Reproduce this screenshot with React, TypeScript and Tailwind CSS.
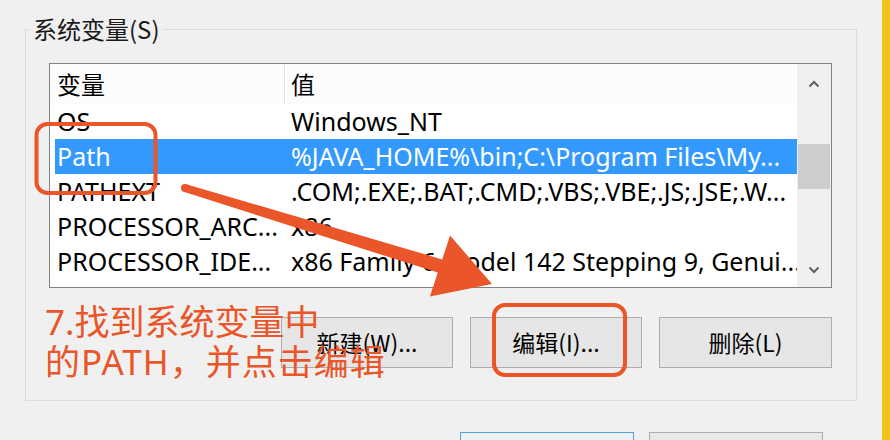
import React from "react";

const ORANGE = "#ea5529";

const rows = [
  { name: "OS", value: "Windows_NT", sel: false },
  { name: "Path", value: "%JAVA_HOME%\\bin;C:\\Program Files\\My...", sel: true },
  { name: "PATHEXT", value: ".COM;.EXE;.BAT;.CMD;.VBS;.VBE;.JS;.JSE;.W...", sel: false },
  { name: "PROCESSOR_ARC...", value: "x86", sel: false },
  { name: "PROCESSOR_IDE...", value: "x86 Family 6 Model 142 Stepping 9, Genui...", sel: false },
];

function Chevron({ up }: { up: boolean }) {
  return (
    <svg width="12" height="8" viewBox="0 0 12 8">
      <path
        d={up ? "M1.5 6.5 L6 2 L10.5 6.5" : "M1.5 1.5 L6 6 L10.5 1.5"}
        fill="none"
        stroke="#606060"
        strokeWidth="2"
      />
    </svg>
  );
}

export default function App() {
  return (
    <div className="relative flex h-[440px] w-[890px] overflow-hidden bg-[#f0f0f0] font-['Noto_Sans','Noto_Sans_CJK_SC',sans-serif] text-black">
      <div className="flex w-[882px] flex-col pl-[25px] pt-[29px]">
        <div className="relative w-[832px] border border-[#dcdcdc] pb-[32px] pl-[23px] pr-[24px] pt-[33px]">
          <div className="absolute left-[5px] top-[-16px] bg-[#f0f0f0] px-[2px] font-['Noto_Sans_CJK_SC','Noto_Sans',sans-serif] text-[24px] leading-[30px] text-[#1a1a1a]">
            系统变量(S)
          </div>
          <div className="flex h-[225px] border border-[#828282] bg-white">
            <div className="flex min-w-0 flex-1 flex-col">
              <div className="flex h-[40px] bg-[#fcfcfc]">
                <div className="flex w-[235px] items-center border-r border-[#e5e5e5] pl-[7px] font-['Noto_Sans_CJK_SC',sans-serif] text-[24px]">
                  变量
                </div>
                <div className="flex items-center pl-[6px] font-['Noto_Sans_CJK_SC',sans-serif] text-[24px]">
                  值
                </div>
              </div>
              {rows.map((r) => (
                <div
                  key={r.name}
                  className={
                    "ml-[5px] flex h-[35px] items-center whitespace-nowrap text-[25px] leading-[35px] " +
                    (r.sel ? "bg-[#3399ff] text-white" : "")
                  }
                >
                  <div className="w-[230px] overflow-hidden pl-[2px]">{r.name}</div>
                  <div className="min-w-0 flex-1 overflow-hidden pl-[6px]">{r.value}</div>
                </div>
              ))}
            </div>
            <div className="flex w-[34px] flex-col bg-[#f0f0f0]">
              <div className="flex h-[40px] items-center justify-center">
                <Chevron up />
              </div>
              <div className="flex-1 px-[1px] pt-[40px]">
                <div className="h-[45px] bg-[#cdcdcd]" />
              </div>
              <div className="flex h-[34px] items-center justify-center">
                <Chevron up={false} />
              </div>
            </div>
          </div>
          <div className="mt-[29px] flex justify-end gap-[17px] font-['Noto_Sans_CJK_SC',sans-serif] text-[23px]">
            <button className="flex h-[51px] w-[172px] items-center justify-center border border-[#adadad] bg-[#e6e6e6]">
              新建(W)...
            </button>
            <button className="flex h-[51px] w-[172px] items-center justify-center border border-[#adadad] bg-[#e6e6e6]">
              编辑(I)...
            </button>
            <button className="flex h-[51px] w-[173px] items-center justify-center border border-[#adadad] bg-[#e6e6e6]">
              删除(L)
            </button>
          </div>
        </div>
        <div className="ml-[435px] mt-[31px] flex gap-[15px]">
          <div className="h-[40px] w-[174px] border border-[#5aa0e0] bg-[#ecf1f2]" />
          <div className="h-[40px] w-[174px] border border-[#adadad] bg-[#e9e9e9]" />
        </div>
      </div>
      <div className="w-[8px] bg-[#f0c31b]" />

      {/* annotation layer */}
      <div className="pointer-events-none absolute inset-0">
        <svg width="890" height="440" viewBox="0 0 890 440" className="absolute left-0 top-0">
          <rect x="36.5" y="124" width="119" height="69" rx="11" fill="none" stroke={ORANGE} strokeWidth="4" />
          <rect x="494" y="305" width="131" height="70" rx="11" fill="none" stroke={ORANGE} strokeWidth="4" />
          <circle cx="185" cy="188" r="4" fill={ORANGE} />
          <polygon
            points="183.7,191.8 186.3,184.2 442.2,259.4 450.1,235.6 492,284 429.9,296.4 437.8,272.6"
            fill={ORANGE}
          />
        </svg>
        <div className="absolute left-[45px] top-[302px] font-['Noto_Sans','Noto_Sans_CJK_SC',sans-serif] text-[35px] leading-[40px] text-[#ea5529]">
          <div>7.找到系统变量中</div>
          <div className="tracking-[1px]">的PATH，并点击编辑</div>
        </div>
      </div>
    </div>
  );
}
